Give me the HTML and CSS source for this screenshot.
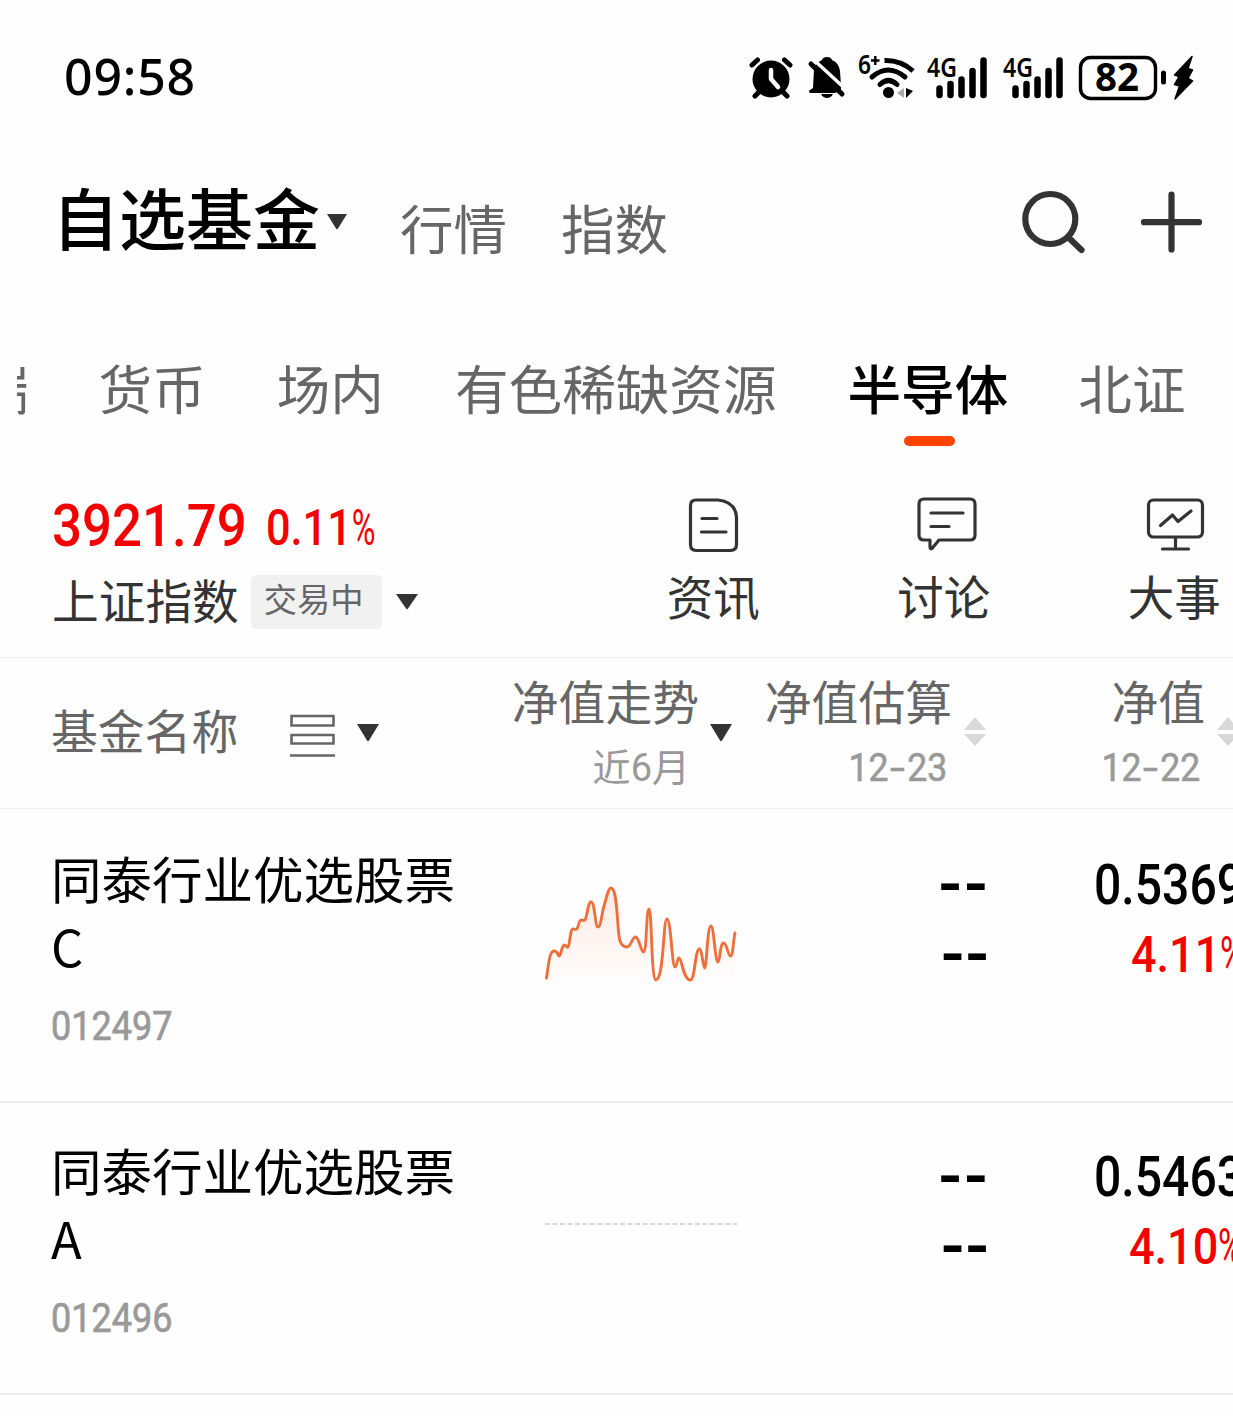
FILE: index.html
```html
<!DOCTYPE html>
<html lang="zh-CN">
<head>
<meta charset="utf-8">
<title>自选基金</title>
<link rel="stylesheet" href="styles.css">
</head>
<body>
<div class="screen">
  <div class="status">
    <span class="clock">09:58</span>
    <svg class="status-icons" width="460" height="60" viewBox="745 46 460 60">
      <g fill="none" stroke="#000" stroke-width="5" stroke-linecap="round">
        <path d="M752 65l5.500-5M790 65l-5.500-5M759 92l-4 4M783 92l4 4"/>
      </g>
      <circle cx="771" cy="79" r="18.500"/>
      <path d="M771 70v9l7 8" fill="none" stroke="#fff" stroke-width="4.500" stroke-linecap="round" stroke-linejoin="round"/>
      <path d="M810 93q-2-2 0-3l3-2 1-19q1-6 8-9 1-3 5-3t5 3q7 3 8 11l1 15v4l-6 3zM821 94h12q-2 4-6 4t-6-4z"/>
      <path d="M814 60l32 29.500" fill="none" stroke="#fefefe" stroke-width="3.500"/>
      <path d="M811 64l31 30" fill="none" stroke="#000" stroke-width="5" stroke-linecap="round"/>
      <text class="net" x="858" y="74" font-size="27" textLength="13" lengthAdjust="spacingAndGlyphs">6</text>
      <path d="M871 60.500h8.500M875.300 56v9" stroke="#000" stroke-width="2.400" fill="none"/>
      <g fill="none" stroke="#000" stroke-width="5">
        <path d="M884.500 60.500Q901 60 913 71"/>
        <path d="M872 77Q888 63 905 77M880 84.500q8.500-8 17 0" stroke-linecap="round"/>
      </g>
      <circle cx="888.500" cy="92.500" r="5.500"/>
      <path d="M904 88v10l-7-5z" fill="#aaa"/>
      <path d="M906 88v10l7-7z"/>
      <g id="signal">
        <text class="net" x="927" y="77" font-size="27" textLength="30" lengthAdjust="spacingAndGlyphs">4G</text>
        <path d="M939.500 88.500v6.500M950.500 84v11M961.500 79.500V95M972.500 71v24M983.500 60.500V95" fill="none" stroke="#000" stroke-width="6.500" stroke-linecap="round"/>
      </g>
      <use href="#signal" x="76"/>
      <rect x="1080.500" y="57.500" width="75" height="41" rx="10" fill="none" stroke="#000" stroke-width="3.400"/>
      <text class="battery" x="1095" y="91" font-size="39" textLength="44" lengthAdjust="spacingAndGlyphs">82</text>
      <path d="M1163.500 73v9" stroke="#000" stroke-width="5" stroke-linecap="round"/>
      <path d="M1192 56.500L1174.500 75l4.500 1.500-4.500 8 5 1.500-4.500 13 17.500-18-4.500-2.500 4.500-8.500-4.500-1.500z" stroke="#000" stroke-width="1.500" stroke-linejoin="round"/>
    </svg>
  </div>

  <header class="top">
    <h1 class="title">自选基金</h1>
    <svg class="title-arrow" width="24" height="18" viewBox="0 0 24 18"><path d="M2 1h20L13 15.500q-1 1.500-2 0z" fill="#333"/></svg>
    <span class="top-link">行情</span>
    <span class="top-link second">指数</span>
    <svg class="top-tools" width="190" height="70" viewBox="1020 188 190 70" fill="none" stroke="#333" stroke-width="6.200" stroke-linecap="round">
      <circle cx="1050.300" cy="219" r="25"/><path d="M1069 238l12.500 12M1144 222.200h55M1171.500 194.500v55"/>
    </svg>
  </header>

  <nav class="tabs">
    <div class="tab-track">
      <span class="tab">瑞</span><span class="tab">货币</span><span class="tab">场内</span><span class="tab">有色稀缺资源</span><span class="tab active">半导体</span><span class="tab">北证</span>
    </div>
  </nav>

  <section class="market">
    <div class="index">
      <div class="quote"><span class="num points">3921.79</span><span class="num change">0.11<span class="pct">%</span></span></div>
      <div class="index-name"><span>上证指数</span><span class="badge">交易中</span>
        <svg width="24" height="18" viewBox="0 0 24 18"><path d="M0 1h22L12 15.500q-1 1.500-2 0z" fill="#333"/></svg></div>
    </div>
    <div class="shortcuts">
      <div class="shortcut">
        <svg width="64" height="60" viewBox="681 494 64 60" fill="none" stroke="#333" stroke-width="3.200" stroke-linecap="round" stroke-linejoin="round"><path d="M696 500h22q18 2 18.500 18v26.500q0 6-6 6h-34.500q-5.500 0-5.500-6v-39q0-5.500 5.500-5.500zM702 518.500h15M701.500 532h24.500"/></svg>
        <span>资讯</span>
      </div>
      <div class="shortcut">
        <svg width="66" height="60" viewBox="911 494 66 60" fill="none" stroke="#333" stroke-width="3.200" stroke-linecap="round" stroke-linejoin="round"><path d="M924 499h46q5 0 5 5v31q0 5-5 5h-31l-7 8.500q-2 1-2-2v-6.500h-6q-5 0-5-5v-31q0-5 5-5zM931 513h32M931 526.500h18"/></svg>
        <span>讨论</span>
      </div>
      <div class="shortcut">
        <svg width="64" height="60" viewBox="1142 494 64 60" fill="none" stroke="#333" stroke-width="3.200" stroke-linecap="round" stroke-linejoin="round"><rect x="1148.500" y="500" width="54" height="37" rx="5"/><path d="M1160.500 525.500l12-10.500 5.500 6.500 13-10.500M1175.500 538v10M1162.500 549h26"/></svg>
        <span>大事</span>
      </div>
    </div>
  </section>

  <div class="row thead">
    <div class="col-name">
      <span>基金名称</span>
      <svg width="46" height="44" viewBox="290 714 46 44" fill="none" stroke="#666" stroke-width="2.600"><path d="M291.500 716h42v9.500h-42zM291.500 735h42v8.500h-42zM290 755.500h45"/></svg>
      <svg class="name-arrow" width="24" height="18" viewBox="0 0 24 18"><path d="M0 0h22L12 16.500q-1 1.500-2 0z" fill="#333"/></svg>
    </div>
    <div class="head-cell trend"><span>净值走势</span><small>近<span class="six">6</span>月</small></div>
    <svg class="sort" width="24" height="18" viewBox="0 0 24 18"><path d="M1 0h22L13 16.500q-1 1.500-2 0z" fill="#333"/></svg>
    <div class="head-cell estimate"><span>净值估算</span><small class="num">12<i>-</i>23</small></div>
    <svg class="sort pair" width="24" height="30" viewBox="0 0 24 30"><path d="M1 13L12 0l11 13zM1 17h22L12 29z" fill="#d8d8d8"/></svg>
    <div class="head-cell nav"><span>净值</span><small class="num">12<i>-</i>22</small></div>
    <svg class="sort pair" width="24" height="30" viewBox="0 0 24 30"><path d="M1 13L12 0l11 13zM1 17h22L12 29z" fill="#d8d8d8"/></svg>
  </div>

  <div class="row fund first">
    <div class="fund-name">同泰行业优选股票<br>C<div class="num code">012497</div></div>
    <svg class="spark" width="200" height="110" viewBox="540 880 200 110">
      <defs><linearGradient id="fade" x1="0" y1="0" x2="0" y2="1"><stop offset="0" stop-color="#f76f38" stop-opacity=".14"/><stop offset="1" stop-color="#f76f38" stop-opacity=".01"/></linearGradient></defs>
      <path fill="url(#fade)" d="M546.500 978C549 960 550 951 554 951S558 956 559 956C561 956 562 945 564 945S567 948 568 947C570 945 570 929 573 929S576 930 577 929 579 920 581 920 584 921 585 920C587 917 588 902 591 902 595 902 595 927 598 927S602 912 604 906 608 888 611 888C618 888 617 933 620 941 622 946 625 947 627 947 631 947 632 937 635.500 937S641 952 643.500 952C647 952 646 909 649 909S651 980 656 980C664 980 663 919 667 919S672 967 675 967C677 967 677 958 679 958 682 958 683 980 690.500 980 695 980 695 949 699.500 949 702 949 703 968 704.500 968 707 968 707 926 711 926 714 926 715 962 718 962 720 962 720 943 723.500 943S728 956 730.500 956C733 956 733 942 735 933V980H546z"/>
      <path fill="none" stroke="#ed703c" stroke-width="2.900" stroke-linecap="round" d="M546.500 978C549 960 550 951 554 951S558 956 559 956C561 956 562 945 564 945S567 948 568 947C570 945 570 929 573 929S576 930 577 929 579 920 581 920 584 921 585 920C587 917 588 902 591 902 595 902 595 927 598 927S602 912 604 906 608 888 611 888C618 888 617 933 620 941 622 946 625 947 627 947 631 947 632 937 635.500 937S641 952 643.500 952C647 952 646 909 649 909S651 980 656 980C664 980 663 919 667 919S672 967 675 967C677 967 677 958 679 958 682 958 683 980 690.500 980 695 980 695 949 699.500 949 702 949 703 968 704.500 968 707 968 707 926 711 926 714 926 715 962 718 962 720 962 720 943 723.500 943S728 956 730.500 956C733 956 733 942 735 933"/>
    </svg>
    <div class="est"><span>--</span><span class="small">--</span></div>
    <div class="value"><span class="num price">0.5369</span><span class="num rate">4.11<span class="pct">%</span></span></div>
  </div>

  <div class="row fund">
    <div class="fund-name">同泰行业优选股票<br>A<div class="num code">012496</div></div>
    <svg class="spark" width="200" height="110" viewBox="540 1172 200 110"><path d="M545 1224h192" stroke="#ccc" stroke-width="1.500" stroke-dasharray="5 2.500"/></svg>
    <div class="est"><span>--</span><span class="small">--</span></div>
    <div class="value"><span class="num price">0.5463</span><span class="num rate ten">4.10<span class="pct">%</span></span></div>
  </div>
</div>
</body>
</html>
```
FILE: styles.css
```css
* { box-sizing: border-box; }
body {
  margin: 0;
  background: #fefefe;
  color: #000;
  font-family: "Noto Sans CJK SC", sans-serif;
}
svg { display: block; flex: none; }
.screen { width: 1233px; height: 1416px; overflow: hidden; }
.num {
  display: inline-block;
  font-family: Roboto, sans-serif;
  font-weight: 500;
  white-space: nowrap;
  transform: scaleX(.9);
  transform-origin: left center;
}
.pct { display: inline-block; font-weight: 400; transform: scaleX(.75); transform-origin: left center; }

.status { display: flex; height: 150px; padding: 46px 0 0 64px; }
.clock { width: 681px; font: 500 50px/60px "Noto Sans", sans-serif; letter-spacing: .8px; }
.net { font-family: "Noto Sans", sans-serif; font-weight: 600; }
.battery { font-family: "Noto Sans", sans-serif; font-weight: 700; }

.top { display: flex; height: 180px; padding-left: 52px; }
.title { margin: 0; width: 273px; font-size: 67px; font-weight: 500; line-height: 132px; white-space: nowrap; }
.title-arrow { margin: 63px 51px 0 0; }
.top-link { width: 162px; font-size: 53.500px; line-height: 154px; color: #666; }
.top-link.second { width: 458px; margin-left: -1px; margin-right: 1px; }
.top-tools { margin-top: 38px; }

.tabs { height: 150px; margin-left: 17px; overflow: hidden; }
.tab-track { display: flex; gap: 71px; margin-left: -42px; }
.tab { flex: none; height: 116px; font-size: 53.600px; line-height: 114px; color: #666; }
.tab:first-child { margin-right: -1px; }
.tab.active { font-weight: 500; color: #000; }
.tab.active::after {
  content: "";
  display: block;
  width: 51px;
  height: 10px;
  margin: -8px 0 0 56px;
  border-radius: 5px;
  background: #ff4400;
}
.tab:last-child { margin-left: -1px; }

.market { display: flex; height: 178px; border-bottom: 1px solid #eee; }
.index { flex: none; width: 598px; padding: 10px 0 0 52px; }
.quote { display: flex; height: 72px; color: #f40000; }
.points { width: 214px; font-size: 60px; line-height: 72px; transform: scaleX(.88); }
.change { font-size: 50px; line-height: 77px; transform: scaleX(.865); }
.index-name { display: flex; align-items: center; height: 74px; font-size: 46.700px; line-height: 76px; color: #333; }
.badge { width: 131px; height: 54px; margin: 6px 14px 0 12px; padding-left: 13px; border-radius: 5px; background: #f1f1f1; color: #666; font-size: 33.300px; line-height: 46px; }
.index-name svg { margin-top: 6px; }
.shortcuts { display: flex; flex: none; }
.shortcut { display: flex; flex: none; flex-direction: column; align-items: center; width: 230.500px; padding-top: 14px; font-size: 46.500px; line-height: 82px; color: #333; }

.row { display: flex; }
.thead { height: 151px; border-bottom: 1px solid #eee; color: #666; font-size: 46.800px; }
.col-name { display: flex; flex: none; width: 511px; padding-left: 51px; line-height: 141px; }
.col-name svg { margin: 56px 21px 0 52px; }
.col-name .name-arrow { margin: 66px 0 0; }
.head-cell { display: flex; flex: none; flex-direction: column; align-items: flex-end; width: 188px; padding-top: 10px; line-height: 64px; }
.head-cell small { height: 66px; padding-right: 9px; font-size: 38px; line-height: 66px; color: #999; }
.head-cell small.num { padding-right: 5px; font-size: 39.500px; line-height: 71px; font-weight: 400; transform-origin: right center; -webkit-text-stroke: .6px #999; }
.head-cell i { display: inline-block; margin: 0 5px; font-style: normal; transform: scaleX(1.500); }
.six { font-family: Roboto, sans-serif; }
.sort { margin: 66px 0 0 10px; }
.sort.pair { margin: 59px 0 0 11px; }
.estimate { margin-left: 31px; }
.nav { width: 218px; }

.fund { height: 292px; border-bottom: 2px solid #eee; }
.fund.first { height: 294px; padding-top: 2px; }
.fund-name { flex: none; width: 489px; margin-left: 51px; padding-top: 32px; font-size: 50.500px; line-height: 68px; }
.code { display: block; font-size: 40px; line-height: 96px; color: #999; font-weight: 400; -webkit-text-stroke: .7px #999; }
.spark { margin-top: 69px; }
.est { display: flex; flex: none; flex-direction: column; width: 248px; padding: 38px 4px 0 0; align-items: flex-end; font: 700 46px/70px "DejaVu Sans Mono", monospace; letter-spacing: -7px; }
.est span { transform: scaleX(1.250); transform-origin: right center; }
.est .small { letter-spacing: -8px; }
.value { display: flex; flex: none; flex-direction: column; width: 245px; padding: 39px 0 0 106px; }
.price { font-size: 55px; line-height: 70px; transform: scaleX(.875); }
.rate { margin-left: 37px; font-size: 50px; line-height: 70px; color: #f40000; }
.rate.ten { margin-left: 35px; }
```
